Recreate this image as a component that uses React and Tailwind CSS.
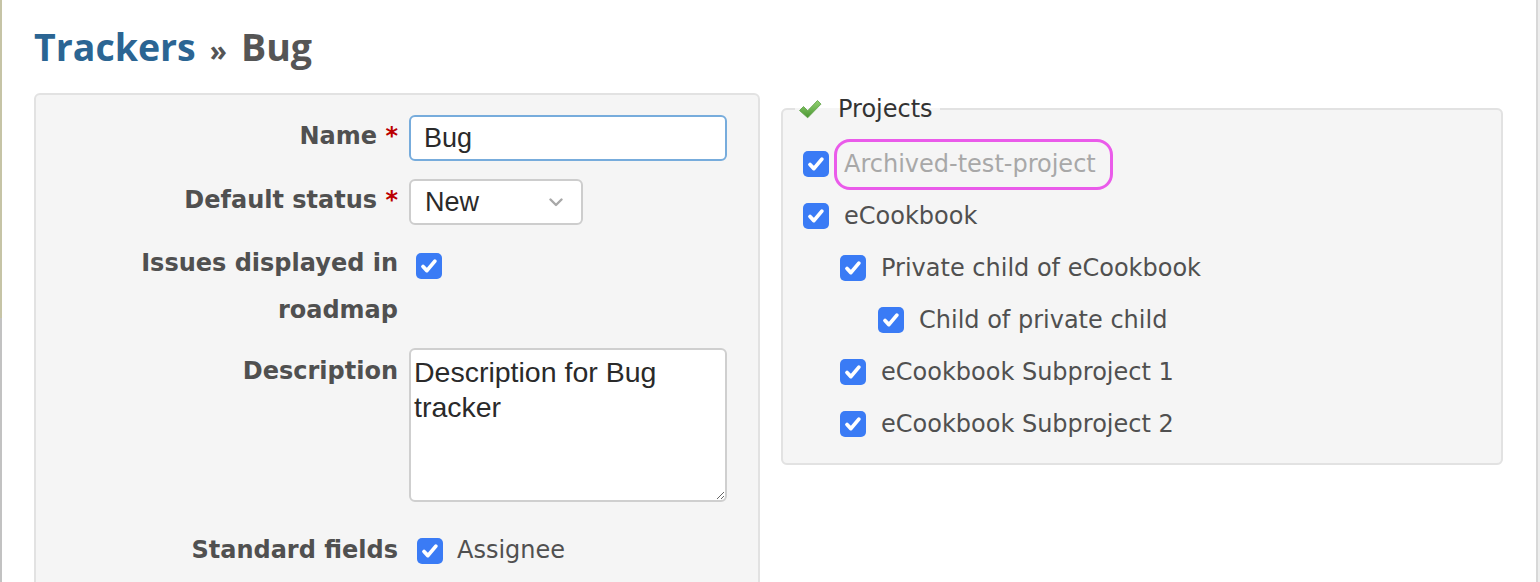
import React from "react";

const verdana = { fontFamily: '"DejaVu Sans", Verdana, sans-serif' };

function Check({ className = "" }) {
  return (
    <span className={"w-[26px] h-[26px] rounded-[5px] bg-[#3a7bf5] flex items-center justify-center shrink-0 " + className}>
      <svg width="20" height="20" viewBox="0 0 16 16">
        <path d="M3.2 8.4l3.1 3.3 6.4-7.6" stroke="#fff" strokeWidth="3" fill="none" strokeLinecap="round" strokeLinejoin="round" />
      </svg>
    </span>
  );
}

function Label({ children, req, className = "" }) {
  return (
    <div className={"w-[362px] shrink-0 text-right font-bold text-[24px] leading-[47px] text-[#505050] " + className} style={verdana}>
      {children}
      {req && <span className="text-[#bb0000]"> *</span>}
    </div>
  );
}

function ProjectRow({ indent = 0, children, archived }) {
  const ml = indent === 0 ? "ml-0" : indent === 1 ? "ml-[37px]" : "ml-[75px]";
  return (
    <div className={"h-[52px] flex items-center " + ml}>
      <Check />
      {archived ? (
        <span className="ml-[5px] h-[51px] border-[3px] border-[#ea5bea] rounded-[16px] flex items-center pl-[7px] pr-[14px] text-[24px] text-[#a8a8a8]" style={verdana}>
          {children}
        </span>
      ) : (
        <span className="ml-[15px] text-[24px] text-[#505050]" style={verdana}>
          {children}
        </span>
      )}
    </div>
  );
}

export default function App() {
  return (
    <div className="flex h-[582px] w-[1540px] overflow-hidden bg-white">
      <div className="w-[2px] shrink-0 flex flex-col">
        <div className="h-[318px] bg-[#c6c4a6]" />
        <div className="flex-1 bg-[#c2c2c2]" />
      </div>
      <div className="w-[1534px] shrink-0 pl-[32px] pr-[33px]">
        <h2 className="mt-[23px] h-[48px] leading-[48px] text-[37.5px] font-bold whitespace-nowrap flex items-baseline" style={{ fontFamily: '"Open Sans", sans-serif' }}>
          <span className="text-[#2b6593]">Trackers</span>
          <span className="text-[#555] text-[28px] ml-[14px] mr-[14px]">»</span>
          <span className="text-[#555]">Bug</span>
        </h2>
        <div className="mt-[22px] grid grid-cols-[726px_722px] gap-x-[21px] items-start">
          {/* Left box */}
          <div className="border-2 border-[#e2e2e2] rounded-[6px] bg-[#f5f5f5] pt-[20px] pb-[60px]">
            <div className="flex items-start">
              <Label req className="-mt-[2px]">Name</Label>
              <div className="ml-[11px] w-[318px] h-[46px] border-2 border-[#77acdc] rounded-[6px] bg-white flex items-center pl-[13px] text-[27px] text-[#2a2a2a]" style={{ fontFamily: '"Liberation Sans", Arial, sans-serif' }}>
                Bug
              </div>
            </div>
            <div className="flex items-start mt-[18px]">
              <Label req className="-mt-[2px]">Default status</Label>
              <div className="ml-[11px] w-[174px] h-[46px] border-2 border-[#cdcdcd] rounded-[6px] bg-white flex items-center justify-between pl-[14px] pr-[18px] text-[27px] text-[#2a2a2a]" style={{ fontFamily: '"Liberation Sans", Arial, sans-serif' }}>
                <span>New</span>
                <svg width="14" height="9" viewBox="0 0 14 9">
                  <path d="M1.5 1.5l5.5 5.5 5.5-5.5" stroke="#a8a8a8" strokeWidth="2.4" fill="none" strokeLinecap="round" strokeLinejoin="round" />
                </svg>
              </div>
            </div>
            <div className="flex items-start mt-[15px]">
              <Label>
                Issues displayed in
                <br />
                roadmap
              </Label>
              <Check className="ml-[18px] mt-[13px]" />
            </div>
            <div className="flex items-start mt-[14px]">
              <Label>Description</Label>
              <textarea
                readOnly
                defaultValue={"Description for Bug tracker"}
                className="ml-[11px] w-[318px] h-[154px] border-2 border-[#cfcfcf] rounded-[6px] bg-white pl-[3px] pr-[4px] pt-[5px] text-[28.5px] leading-[35px] text-[#2a2a2a] outline-none resize-y"
                style={{ fontFamily: '"Liberation Sans", Arial, sans-serif' }}
              />
            </div>
            <div className="flex items-start mt-[25px]">
              <Label>Standard fields</Label>
              <Check className="ml-[19px] mt-[11px]" />
              <span className="ml-[14px] text-[24px] leading-[47px] text-[#505050]" style={verdana}>
                Assignee
              </span>
            </div>
          </div>
          {/* Right fieldset */}
          <fieldset className="mt-[1px] border-2 border-[#e2e2e2] rounded-[6px] bg-[#f5f5f5] px-[12px] pt-[14px] pb-[13px]">
            <legend className="px-[3px] h-[30px] flex items-center">
              <svg width="24" height="22" viewBox="0 0 24 22" className="shrink-0">
                <defs>
                  <linearGradient id="gck" x1="0" y1="0" x2="0" y2="1">
                    <stop offset="0" stopColor="#93d272" />
                    <stop offset="1" stopColor="#4a9632" />
                  </linearGradient>
                </defs>
                <path d="M1.5 12.5l4-4 4.2 4.2L19.5 2.5l3.5 3.6L9.7 19.8z" fill="url(#gck)" stroke="#5c9e44" strokeWidth="0.8" strokeLinejoin="round" />
              </svg>
              <span className="ml-[16px] pr-[4px] text-[24px] leading-[30px] text-[#333]" style={verdana}>
                Projects
              </span>
            </legend>
            <div className="pl-[8px]">
              <ProjectRow archived>Archived-test-project</ProjectRow>
              <ProjectRow>eCookbook</ProjectRow>
              <ProjectRow indent={1}>Private child of eCookbook</ProjectRow>
              <ProjectRow indent={2}>Child of private child</ProjectRow>
              <ProjectRow indent={1}>eCookbook Subproject 1</ProjectRow>
              <ProjectRow indent={1}>eCookbook Subproject 2</ProjectRow>
            </div>
          </fieldset>
        </div>
      </div>
      <div className="w-[2px] shrink-0 bg-[#d8d8d8]" />
      <div className="w-[2px] shrink-0 bg-[#ededed]" />
    </div>
  );
}
